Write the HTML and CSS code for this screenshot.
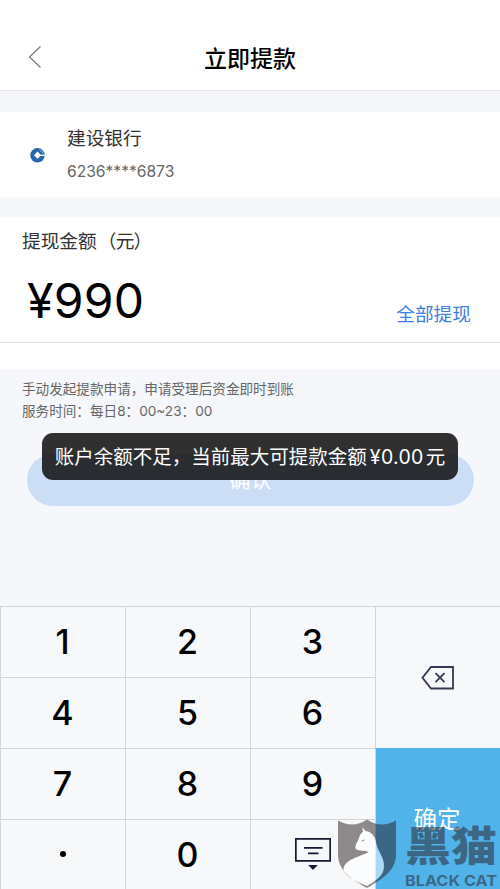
FILE: index.html
```html
<!DOCTYPE html>
<html lang="zh-CN">
<head>
<meta charset="utf-8">
<title>立即提款</title>
<link rel="stylesheet" href="styles.css">
</head>
<body>
<div class="screen">
  <header class="header">
    <svg class="back" viewBox="0 0 14 24"><path d="M12.500 1.500L1.500 12l11 10.500"/></svg>
    <h1>立即提款</h1>
  </header>
  <section class="bank">
    <svg class="bank-logo" viewBox="0 0 16 16">
      <circle cx="7.500" cy="8.300" r="7.200" fill="#2865ac"/>
      <path d="M7.600 4.600l3.600 3.600-3.600 3.600L4 8.200z" fill="#fff"/>
      <path d="M10.500 7.600h5.500v1.300h-5.500z" fill="#fff"/>
      <path d="M9.500 2.800l3.800 3.400M11 1.600l3.600 3.400" fill="none" stroke="#c3d6ea" stroke-width=".7"/>
    </svg>
    <div class="bank-info">
      <div class="bank-name">建设银行</div>
      <div class="bank-card">6236****6873</div>
    </div>
  </section>
  <section class="amount">
    <div class="amount-label">提现金额<span class="unit">（元）</span></div>
    <div class="amount-row">
      <div class="amount-value">¥990</div>
      <a class="all">全部提现</a>
    </div>
  </section>
  <div class="notes">
    <p>手动发起提款申请，申请受理后资金即时到账</p>
    <p>服务时间：每日8：00~23：00</p>
  </div>
  <div class="confirm">
    <span>确认</span>
    <div class="toast">账户余额不足，当前最大可提款金额<span class="money">¥0.00</span>元</div>
  </div>
  <div class="keypad">
    <div class="key">1</div><div class="key">2</div><div class="key">3</div>
    <div class="key del">
      <svg width="34" height="24" viewBox="0 0 34 24"><path d="M10 1h22v21.500H10L1.500 11.800zM14.500 7.200l9 9M23.500 7.200l-9 9"/></svg>
    </div>
    <div class="key">4</div><div class="key">5</div><div class="key">6</div>
    <div class="key">7</div><div class="key">8</div><div class="key">9</div>
    <div class="key ok">确定</div>
    <div class="key"><i class="dot"></i></div><div class="key">0</div>
    <div class="key hide">
      <svg width="36" height="32" viewBox="0 0 36 32"><path d="M.8.8h34.400v22H.8zM9 9.800h18.500M13 15.300h10.500"/><path class="solid" d="M13.200 27h9.600l-4.800 5z"/></svg>
    </div>
  </div>
  <div class="watermark">
    <svg class="shield" viewBox="0 0 60 70">
      <path class="shade" fill-rule="evenodd" d="M1 1.500Q16 10 30 .5Q44 10 59 1.500V35C59 51 47 59 30 69C13 59 1 51 1 35zM25.500 8.500L28.500 12Q37 13 39 23C40 32 47 37 47 47C47 57 38 62 30 67C18 62 8 57 6.500 50C8 40 23 38 32 33C28 31 25 32 21 31C17 30 19 27 19 25C22 22 22 15 26 13z"/>
      <path class="light" d="M25.500 8.500L28.500 12Q37 13 39 23C40 32 47 37 47 47C47 57 38 62 30 67C18 62 8 57 6.500 50C8 40 23 38 32 33C28 31 25 32 21 31C17 30 19 27 19 25C22 22 22 15 26 13z"/>
      <path class="eye" d="M24 22.500q1-2 4-2q-1 2-4 2"/>
    </svg>
    <div class="brand"><div class="brand-cn">黑猫</div><div class="brand-en">BLACK CAT</div></div>
  </div>
</div>
</body>
</html>
```
FILE: styles.css
```css
* { box-sizing: border-box; }
body {
  margin: 0;
  font-family: Inter, "Noto Sans CJK SC", sans-serif;
  color: #333;
}
.screen {
  position: relative;
  width: 500px;
  height: 889px;
  overflow: hidden;
  background: #f6f7fa;
  display: flex;
  flex-direction: column;
}
.header {
  height: 91px;
  flex: none;
  padding: 24px 28px 0;
  display: grid;
  grid-template-columns: 14px 1fr 14px;
  align-items: center;
  background: #fff;
  border-bottom: 1px solid #e5e6e8;
}
.back { width: 14px; height: 24px; fill: none; stroke: #777; stroke-width: 1.2; }
h1 {
  margin: 3px 0 0;
  text-align: center;
  font-size: 23px;
  line-height: 34px;
  font-weight: 500;
  color: #000;
}
.bank {
  height: 85px;
  flex: none;
  margin-top: 21px;
  padding: 13px 30px 0;
  display: flex;
  gap: 21px;
  background: #fff;
}
.bank-logo { width: 16px; height: 16px; margin-top: 22px; }
.bank-name { font-size: 18.700px; line-height: 28px; }
.bank-card { margin-top: 7px; font-size: 15.700px; line-height: 24px; color: #666; letter-spacing: -.05px; }
.amount {
  height: 152px;
  flex: none;
  margin-top: 20px;
  background: #fff;
}
.amount-label { height: 46px; padding: 11px 22px 0; font-size: 18.700px; line-height: 28px; }
.unit { letter-spacing: -.8px; margin-left: 1px; }
.amount-row {
  height: 80px;
  padding: 0 29px 0 27px;
  display: flex;
  justify-content: space-between;
  border-bottom: 1px solid #dedfe0;
}
.amount-value { font-size: 48px; line-height: 75px; color: #000; letter-spacing: .3px; }
.all { padding-top: 38px; font-size: 18.700px; line-height: 28px; color: #3c80e0; }
.notes { padding: 9px 22px 0; height: 85px; flex: none; font-size: 13.600px; line-height: 22px; color: #666; }
.notes p { margin: 0; }
.confirm {
  position: relative;
  height: 52px;
  flex: none;
  margin: 0 26px 0 27px;
  border-radius: 26px;
  background: #ccdef6;
  color: #fff;
  font-size: 21px;
  line-height: 52px;
  text-align: center;
}
.toast {
  position: absolute;
  left: 15px;
  top: -21px;
  width: 416px;
  height: 47px;
  border-radius: 11px;
  background: linear-gradient(#303030 0 45%, #292c31 46%);
  font-size: 19.500px;
  line-height: 49px;
  white-space: nowrap;
}
.money { margin: 0 2px 0 3px; letter-spacing: .3px; }
.keypad {
  height: 284px;
  flex: none;
  margin-top: 100px;
  display: grid;
  grid-template-columns: repeat(4, 125px);
  grid-template-rows: repeat(4, 71px);
  background: #f6f8fa;
}
.key {
  display: flex;
  align-items: center;
  justify-content: center;
  padding: 0 1px 2px 0;
  border-top: 1px solid #d3d5d7;
  border-left: 1px solid #d3d5d7;
  font-size: 34px;
  font-weight: 500;
  color: #000;
}
.del { grid-column: 4; grid-row: 1 / 3; padding: 0; }
.ok { grid-column: 4; grid-row: 3 / 5; padding: 0 2px 4px 0; background: #52b3ea; border-top-color: #52b3ea; color: #fff; font-size: 23.500px; font-weight: 400; }
.key svg { fill: none; stroke: #39374f; stroke-width: 1.8; }
.hide { padding: 0; }
.hide svg { stroke: #191831; margin-top: -3px; }
.hide svg .solid { fill: #191831; stroke: none; }
.dot { width: 6px; height: 6px; border-radius: 50%; background: #000; }
.watermark {
  position: absolute;
  left: 337px;
  top: 819px;
  display: flex;
  color: rgba(37, 28, 30, .5);
}
.shield { width: 60px; height: 70px; }
.shade { fill: rgba(37, 28, 30, .5); }
.light { fill: rgba(255, 255, 255, .5); }
.eye { fill: rgba(37, 28, 30, .5); }
.brand { margin-left: 8px; white-space: nowrap; }
.brand-cn { height: 52px; font-size: 46px; line-height: 54px; font-weight: 900; transform: scaleY(.9); }
.brand-en { font-size: 14.500px; line-height: 19px; font-weight: 700; transform: scaleX(1.12); transform-origin: left; }
```
